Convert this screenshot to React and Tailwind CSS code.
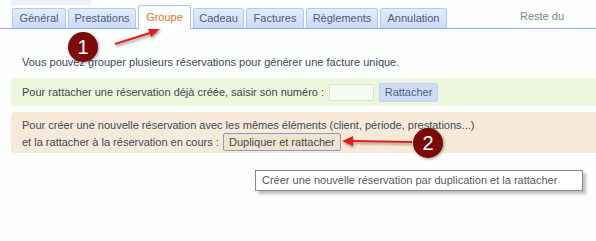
import React from "react";

const tabs = [
  { label: "Général", w: "w-[54px]" },
  { label: "Prestations", w: "w-[68px]" },
  { label: "Groupe", w: "w-[53px]" },
  { label: "Cadeau", w: "w-[51px]" },
  { label: "Factures", w: "w-[58px]" },
  { label: "Règlements", w: "w-[72px]" },
  { label: "Annulation", w: "w-[67px]" },
];

const Badge = ({ n, className }) => (
  <div className={`absolute w-[30px] h-[30px] rounded-full bg-[#7d0a0a] text-white text-[20px] flex items-center justify-center shadow-[1px_1px_3px_rgba(0,0,0,0.4)] ${className}`}>
    {n}
  </div>
);

const App = () => {
  return (
    <div className="relative w-[596px] h-[241px] bg-[#fcfdfd] overflow-hidden text-[11px] text-[#3e4a57]" style={{ fontFamily: '"Liberation Sans", Arial, sans-serif' }}>
      <div className="ml-[11px] w-[80px] h-[5px] bg-[#eef0fc]" />

      <div className="flex items-end h-[24px] pl-[12px] border-b border-[#8fb0e6]">
        {tabs.map((t) => (
          <div
            key={t.label}
            className={
              t.label === "Groupe"
                ? `${t.w} shrink-0 mr-[2px] h-[24px] flex items-center justify-center bg-white border border-b-0 border-[#a9c3ec] rounded-t-[3px] text-[#e0761c] -mb-px`
                : `${t.w} shrink-0 mr-[2px] h-[20px] flex items-center justify-center bg-gradient-to-b from-[#e3ecfc] to-[#cbdbf8] border border-b-0 border-[#b3c8ee] rounded-t-[3px] text-[#4b607d]`
            }
          >
            {t.label}
          </div>
        ))}
        <div className="shrink-0 ml-[71px] mb-[4px] text-[#7a8694] whitespace-nowrap">Reste du</div>
      </div>

      <div className="pl-[22px] pt-[26px] pb-[9px] leading-[14px]">Vous pouvez grouper plusieurs réservations pour générer une facture unique.</div>

      <div className="ml-[11px] h-[28px] bg-[#ebf6dc] rounded-l-[4px] flex items-center pl-[11px] gap-[5px]">
        <span>Pour rattacher une réservation déjà créée, saisir son numéro :</span>
        <div className="w-[45px] h-[17px] bg-[#f7fcf3] border border-[#d6e8c4] rounded-[2px]" />
        <button className="h-[19px] w-[59px] bg-[#cfdcf9] border border-[#c1d1f3] rounded-[2px] text-[#4b607d] leading-none">Rattacher</button>
      </div>

      <div className="ml-[11px] mt-[6px] h-[41px] bg-[#f8ead8] rounded-l-[4px] pl-[11px] pt-[6px] leading-[15px]">
        <div>Pour créer une nouvelle réservation avec les mêmes éléments (client, période, prestations...)</div>
        <div className="flex items-center gap-[4px]">
          <span>et la rattacher à la réservation en cours :</span>
          <button className="h-[18px] w-[118px] bg-[#f3e2cc] border border-[#7e9fcf] rounded-[2px] text-[#3e4a57] leading-none">Dupliquer et rattacher</button>
        </div>
      </div>

      <div className="absolute left-[255px] top-[170px] w-[328px] h-[21px] pl-[6px] flex items-center bg-white border border-[#8a8a8a] text-[#5a5a5a] shadow-[3px_3px_3px_rgba(0,0,0,0.25)] whitespace-nowrap">
        Créer une nouvelle réservation par duplication et la rattacher
      </div>

      <svg className="absolute left-0 top-0" width="596" height="241">
        <defs>
          <filter id="sh" x="-20%" y="-20%" width="140%" height="140%">
            <feDropShadow dx="1" dy="2" stdDeviation="1" floodOpacity="0.35" />
          </filter>
        </defs>
        <g filter="url(#sh)" stroke="#e31b1b" fill="#e31b1b">
          <line x1="115" y1="44" x2="150" y2="33" strokeWidth="2" />
          <polygon points="160,29 148,29 151,37" stroke="none" />
          <line x1="412" y1="142" x2="352" y2="141" strokeWidth="2" />
          <polygon points="342,141 353,136 353,146" stroke="none" />
        </g>
      </svg>

      <Badge n="1" className="left-[68px] top-[32px]" />
      <Badge n="2" className="left-[413px] top-[128px]" />
    </div>
  );
};

export default App;
